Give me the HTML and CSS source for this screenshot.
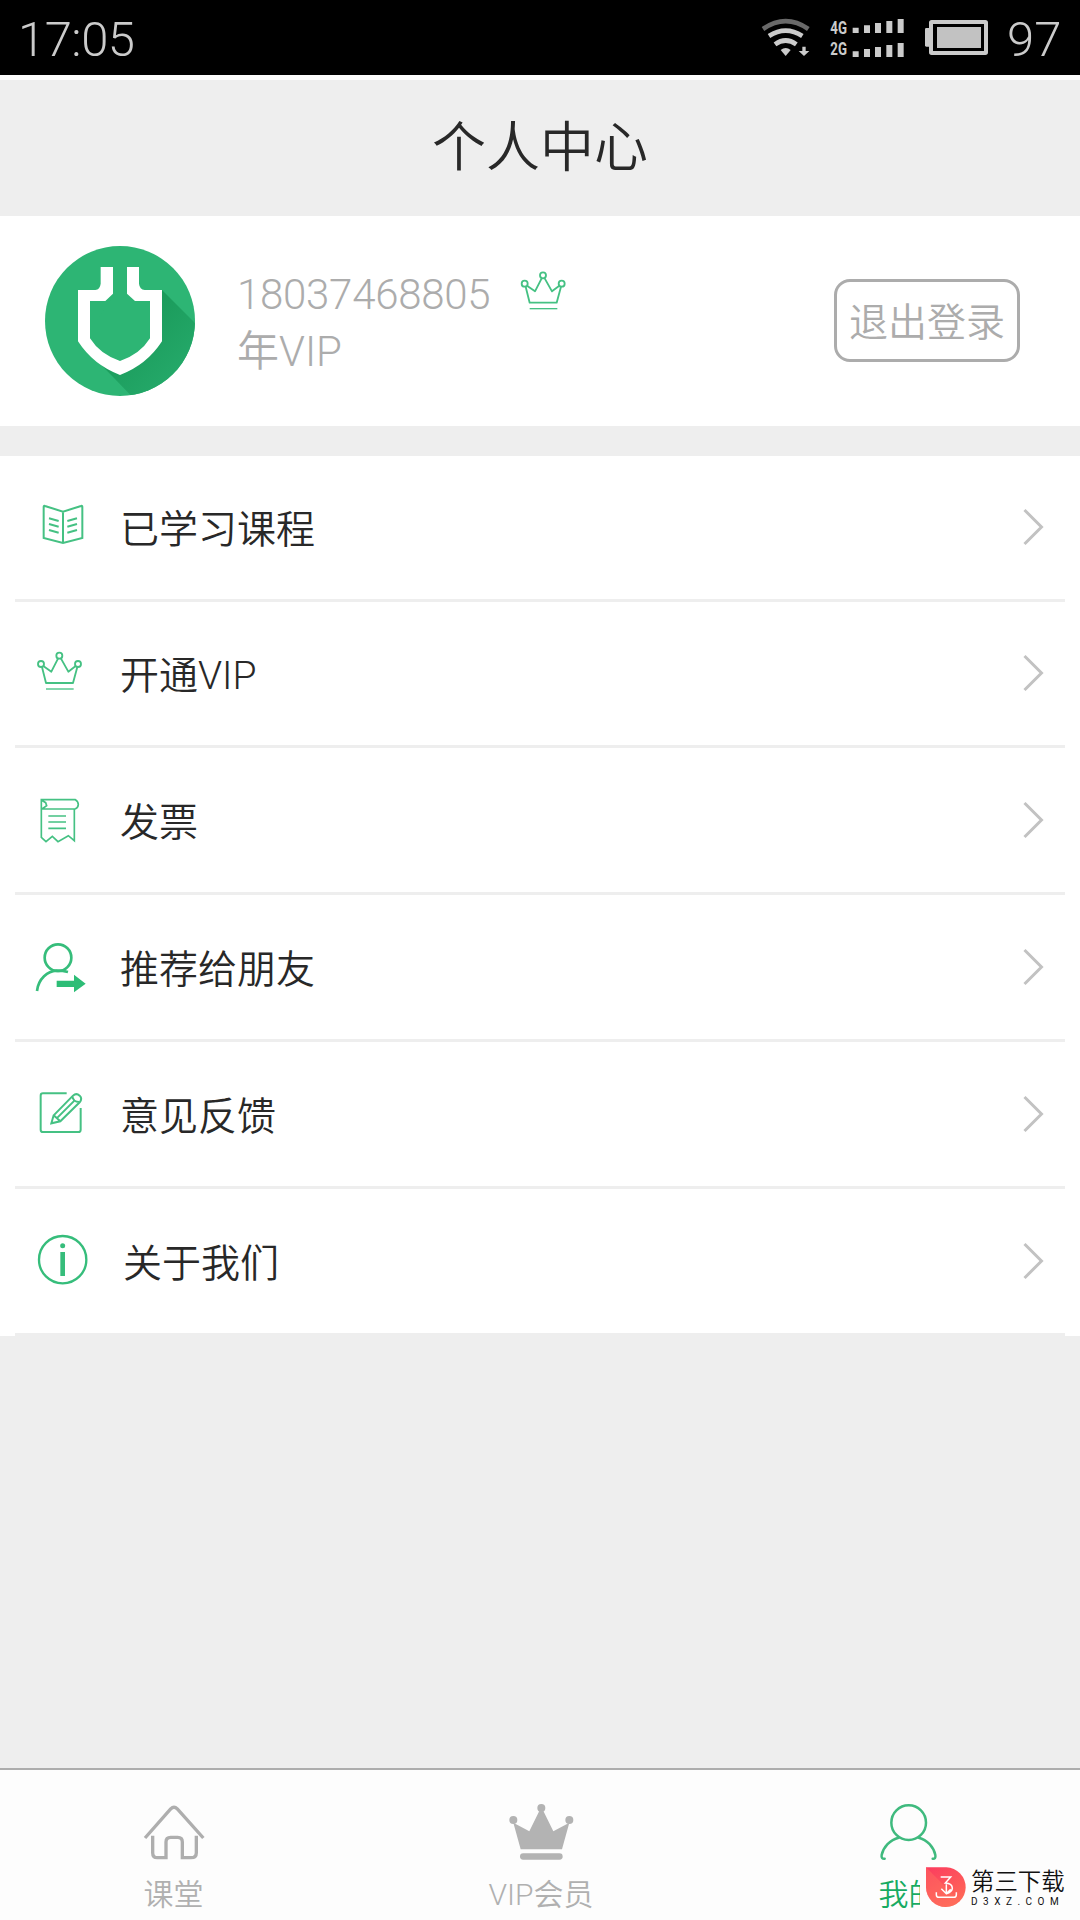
FILE: index.html
```html
<!DOCTYPE html>
<html lang="zh-CN">
<head>
<meta charset="utf-8">
<title>个人中心</title>
<link rel="stylesheet" href="styles.css">
</head>
<body>
<div class="screen">
  <div class="status">
    <span class="clock">17:05</span>
    <svg class="status-icons" width="270" height="75" viewBox="90 0 810 225">
      <g fill="none" stroke="#cbcbcb" stroke-width="14">
        <path d="M129 87Q197 40 265 87" stroke="#696969"/>
        <path d="M147 108Q197 76 247 108"/>
        <path d="M165 133Q197 110 229 133"/>
      </g>
      <g fill="#cbcbcb">
        <path d="M182 150Q197 138 212 150L197 168Z"/>
        <path d="M247 140h10v13h11l-16 15-16-15h11Z"/>
        <text class="net" x="331" y="102" textLength="50" lengthAdjust="spacingAndGlyphs">4G</text>
        <text class="net" x="331" y="164" textLength="50" lengthAdjust="spacingAndGlyphs">2G</text>
        <path d="M398 83h18v16h-18zM432 76h18v23h-18zM465 69h18v30h-18zM499 63h18v36h-18zM533 57h18v42h-18z"/>
        <path d="M398 154h18v17h-18zM432 147h18v24h-18zM465 141h18v30h-18zM499 135h18v36h-18zM533 129h18v42h-18z"/>
        <rect x="615" y="84" width="18" height="56" rx="4"/>
        <rect x="651" y="81" width="132" height="63" fill="#c2c2c2"/>
      </g>
      <rect x="633" y="66" width="165" height="93" rx="2" fill="none" stroke="#cbcbcb" stroke-width="12"/>
    </svg>
    <span class="battery">97</span>
  </div>

  <header class="header"><h1>个人中心</h1></header>

  <section class="profile">
    <svg class="avatar" width="150" height="150" viewBox="75 63 450 450">
      <defs>
        <linearGradient id="shade" x1="0" y1="0" x2="1" y2="1">
          <stop offset="0.3" stop-color="#1a9a5a"/>
          <stop offset="1" stop-color="#2bb273"/>
        </linearGradient>
        <clipPath id="disc"><circle cx="300" cy="288" r="225"/></clipPath>
      </defs>
      <circle cx="300" cy="288" r="225" fill="#2db574"/>
      <path d="M426 195L560 329V560H380L210 385Z" fill="url(#shade)" clip-path="url(#disc)"/>
      <path d="M192 212H236Q260 210 260 186V126M340 126V186Q342 210 368 212H408V342Q370 402 300 430Q230 402 192 342Z" fill="#2db574"/>
      <path fill="#fff" fill-rule="evenodd" d="M242 126H279V206L256 228H210V340Q240 388 300 408Q360 388 390 340V228H345L321 206V126H357V176Q359 194 374 195H426V349Q380 420 300 450Q220 420 174 349V195H226Q240 193 242 176Z"/>
    </svg>
    <div class="account">
      <div class="phone">18037468805
        <svg class="vip-mark" width="50" height="44" viewBox="415 535 150 132">
          <use href="#crown" x="312" y="27"/>
        </svg>
      </div>
      <div>年VIP</div>
    </div>
    <button class="logout" type="button">退出登录</button>
  </section>

  <nav class="menu">
    <a class="row short">
      <svg class="icon" viewBox="45 -72 225 429">
        <path d="M131 80Q131 76 135 78L189 95L243 78Q247 76 247 80V174L189 189L131 174ZM189 95V189M147 115L176 123M147 132L176 140M147 150L176 158M231 115L202 123M231 132L202 140M231 150L202 158"/>
      </svg>
      <span>已学习课程</span>
      <svg class="arrow" viewBox="0 0 22 38"><path d="M2.500 2L19.500 19L2.500 36"/></svg>
    </a>
    <a class="row short">
      <svg class="icon" viewBox="45 366 225 429">
        <g id="crown" fill="none" stroke="#45c183" stroke-width="5.500" stroke-linejoin="round">
          <circle cx="123" cy="552" r="9"/><circle cx="178" cy="527" r="9"/><circle cx="234" cy="552" r="9"/>
          <path d="M126 561L138 609H219L232 561M130 558L154 575L174 536M183 536L205 575L227 558"/>
          <path d="M138 627H221" stroke-width="4"/>
        </g>
      </svg>
      <span>开通VIP</span>
      <svg class="arrow" viewBox="0 0 22 38"><path d="M2.500 2L19.500 19L2.500 36"/></svg>
    </a>
    <a class="row">
      <svg class="icon" viewBox="45 -66 225 432">
        <path stroke-width="5" d="M124 89H226Q235 94 235 104Q234 114 225 117H124ZM124 90L137 98L140 107L126 117M124 117V202L138 215L157 199L174 215L205 197L223 212V117M145 138H198M145 156H198M145 175H198"/>
      </svg>
      <span>发票</span>
      <svg class="arrow" viewBox="0 0 22 38"><path d="M2.500 2L19.500 19L2.500 36"/></svg>
    </a>
    <a class="row">
      <svg class="icon" viewBox="45 375 225 432">
        <g stroke="#36bd7b" stroke-width="8"><circle cx="174" cy="563" r="40"/>
        <path d="M111 663C115 626 144 603 169 602Q190 602 204 606"/></g>
        <path d="M170 632H222V614L257 641L222 667V651H170Z" fill="#2dbd76" stroke="none"/>
      </svg>
      <span>推荐给朋友</span>
      <svg class="arrow" viewBox="0 0 22 38"><path d="M2.500 2L19.500 19L2.500 36"/></svg>
    </a>
    <a class="row">
      <svg class="icon" viewBox="45 -54 225 432">
        <path d="M200 100H129Q122 100 122 107V209Q122 216 129 216H235Q242 216 242 209V144"/>
        <path d="M161 166L219 107Q229 98 239 107Q248 116 239 127L181 184L154 190ZM161 166L181 184M217 109Q220 126 237 126M170 175L224 121"/>
      </svg>
      <span>意见反馈</span>
      <svg class="arrow" viewBox="0 0 22 38"><path d="M2.500 2L19.500 19L2.500 36"/></svg>
    </a>
    <a class="row about">
      <svg class="icon" viewBox="45 387 225 432">
        <g stroke="#36bd7b"><circle cx="188" cy="599" r="71" stroke-width="7"/>
        <path d="M188 576V648" stroke-width="14"/></g>
        <circle cx="188" cy="557" r="7.500" fill="#36bd7b" stroke="none"/>
      </svg>
      <span>关于我们</span>
      <svg class="arrow" viewBox="0 0 22 38"><path d="M2.500 2L19.500 19L2.500 36"/></svg>
    </a>
  </nav>

  <footer class="tabs">
    <a class="tab">
      <svg width="66" height="60" viewBox="122 156 198 180" fill="none" stroke="#aeaeae" stroke-width="10">
        <path d="M134 264L211 177Q221 167 231 177L309 264M157 257V308Q157 323 171 323H197V276Q197 262 211 262H232Q246 262 246 276V323H272Q288 323 288 308V257"/>
      </svg>
      <span>课堂</span>
    </a>
    <a class="tab">
      <svg width="66" height="60" viewBox="174 156 198 180" fill="#b3b3b3">
        <circle cx="190" cy="210" r="12"/><circle cx="274" cy="174" r="12"/><circle cx="358" cy="210" r="12"/>
        <path d="M190 218L238 244L269 181H279L310 244L358 218L336 298H212Z"/>
        <rect x="210" y="310" width="128" height="19" rx="9.500"/>
      </svg>
      <span>VIP会员</span>
    </a>
    <a class="tab active">
      <svg width="66" height="60" viewBox="108 156 198 180" fill="none" stroke="#3fba7e" stroke-width="7.500" stroke-linecap="round">
        <circle cx="206" cy="218" r="52"/>
        <path d="M134 326Q123 327 125 315C130 292 150 269 176 263M236 263C262 269 281 292 286 315Q288 327 278 326"/>
      </svg>
      <span>我的</span>
    </a>
  </footer>

  <div class="badge">
    <svg width="40" height="40" viewBox="258 350 120 120">
      <defs>
        <linearGradient id="red" x1="0" y1="0" x2="0.600" y2="1">
          <stop offset="0" stop-color="#fb3c5f"/><stop offset="1" stop-color="#ff6857"/>
        </linearGradient>
      </defs>
      <path d="M258 351H319A59.500 59.500 0 1 1 258 411Z" fill="url(#red)"/>
      <path d="M258 351L358 451Q340 470 318 470A60 60 0 0 1 258 410Z" fill="#ff7160" opacity=".45"/>
      <path d="M302 380H332L316 398Q337 399 337 414Q336 425 319 430M319 402V430M304 415L319 430L332 417M289 426V433Q289 441 297 441H341Q349 441 349 433V426" fill="none" stroke="#fff" stroke-width="4.500"/>
    </svg>
    <div class="badge-text">
      <strong>第三下载</strong>
      <small>D3XZ.COM</small>
    </div>
  </div>
</div>
</body>
</html>
```
FILE: styles.css
```css
* { box-sizing: border-box; }

body {
  margin: 0;
  background: #eee;
  font-family: Roboto, "Noto Sans CJK SC DemiLight", "Noto Sans CJK SC", sans-serif;
  font-weight: 350;
  color: #282828;
}

.screen {
  position: relative;
  display: flex;
  flex-direction: column;
  width: 1080px;
  height: 1920px;
  overflow: hidden;
}

.status {
  display: flex;
  flex: none;
  align-items: center;
  height: 75px;
  padding: 4px 19px 0 18px;
  background: #000;
  color: #cbcbcb;
  font-size: 49px;
  font-weight: 300;
  line-height: 71px;
}

.clock { letter-spacing: -0.5px; }

.status-icons {
  flex: none;
  margin: -4px -13px 0 auto;
}

.battery { width: 54px; }

.net {
  font: 700 53px Roboto, sans-serif;
}

.header {
  flex: none;
  height: 141px;
  border-top: 5px solid #fcfcfc;
  text-align: center;
}

.header h1 {
  margin: 0;
  font-size: 54px;
  font-weight: 350;
  line-height: 138px;
}

.profile {
  display: flex;
  flex: none;
  align-items: center;
  height: 210px;
  padding: 0 60px 0 45px;
  background: #fff;
  color: #acacac;
  font-size: 42px;
  line-height: 56px;
}

.avatar { flex: none; }

.account { margin: 6px 0 0 42px; }

.phone {
  display: flex;
  align-items: center;
  margin-top: -1px;
  padding-bottom: 1px;
  letter-spacing: -0.27px;
}

.vip-mark { margin: -8px 0 0 28px; }

.logout {
  width: 186px;
  height: 83px;
  margin: -1px 0 0 auto;
  padding: 4px 0 0;
  border: 3px solid #acacac;
  border-radius: 16px;
  background: #fff;
  color: #acacac;
  font: inherit;
  font-size: 39px;
}

.menu {
  flex: none;
  margin-top: 30px;
  padding: 0 15px;
  background: #fff;
}

.row {
  display: flex;
  align-items: center;
  height: 147px;
  border-bottom: 3px solid #eee;
  font-size: 39px;
  line-height: 58px;
}

.row.short { height: 146px; }

.row span { padding-top: 5px; }

.icon {
  flex: none;
  width: 75px;
  height: 100%;
  margin-right: 30px;
  fill: none;
  stroke: #45c183;
  stroke-width: 6;
}

.about .icon { margin-right: 33px; }

.arrow {
  width: 22px;
  height: 38px;
  margin: -1px 21px 0 auto;
  fill: none;
  stroke: #c2c2c2;
  stroke-width: 3;
}

.tabs {
  display: grid;
  grid-template-columns: repeat(3, 120px);
  column-gap: 247.5px;
  height: 152px;
  margin-top: auto;
  padding: 32px 0 0 113.5px;
  border-top: 2px solid #adadad;
  background: #fdfdfd;
  color: #b0b0b0;
  font-size: 30px;
  line-height: 44px;
}

.tab {
  display: flex;
  flex-direction: column;
  align-items: center;
  gap: 11px;
  white-space: nowrap;
}

.active { color: #18ab62; }

.badge {
  position: absolute;
  right: 0;
  bottom: 0;
  display: flex;
  width: 160px;
  height: 55px;
  padding: 2px 0 0 6px;
  background: #fdfdfd;
  color: #111;
}

.badge-text {
  display: flex;
  flex-direction: column;
  margin-left: 5px;
}

.badge-text strong {
  font-size: 23.4px;
  font-weight: 500;
  line-height: 30px;
}

.badge-text small {
  font-size: 10px;
  font-weight: 400;
  line-height: 10px;
  letter-spacing: 5.5px;
}
```
